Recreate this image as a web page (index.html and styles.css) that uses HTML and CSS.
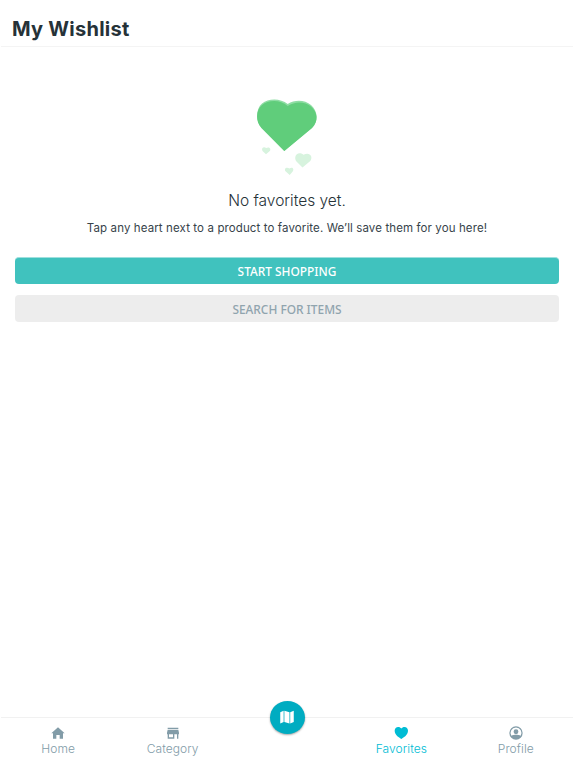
FILE: index.html
```html
<!DOCTYPE html>
<html lang="en">
<head>
    <meta charset="UTF-8">
    <title>My Wishlist</title>
    <meta content="width=device-width, initial-scale=1" name="viewport" />
    <link rel="stylesheet" href="styles.css">
</head>
<body>
    <div class="screen">
        <header class="header">
            <h1>My Wishlist</h1>
        </header>
        <main class="wishlist">
            <svg class="hearts" width="64" height="80" viewBox="255 97 64 80">
                <path class="heart-edge" d="M284.300 151 L261.500 128 C255.500 121.500 255.600 109 262 103.500 C268.500 98 280.500 98 287.700 104 C295 99.300 305 99.800 311 105 C318 111 318.500 121.500 312 128 Z" />
                <path class="heart-big" d="M284.300 151 L261.500 128 C255.500 121.500 255.600 110.500 262 105 C268.500 99.500 280.500 99.500 287.700 106 C295 101 305 101.300 311 106.500 C318 112.500 318.500 121.500 312 128 Z" />
                <path class="heart-small" d="M266 154.300 L262.500 151 C261 148.300 263.500 146.300 266.200 148 C269 146.300 271.500 148.500 269.800 151 Z" />
                <path class="heart-small" d="M302.500 167.500 L296 161 C293.500 156.500 297.500 150.500 303.500 154.800 C309.500 151.500 313.500 156.500 310.300 161 Z" />
                <path class="heart-small" d="M289.700 175 L285.500 171.300 C283.800 168.500 286.500 166.500 289.500 168.500 C292.300 166.500 294.500 168.800 292.700 171.500 Z" />
            </svg>
            <h2>No favorites yet.</h2>
            <p class="hint">Tap any heart next to a product to favorite. We’ll save them for you here!</p>
            <div class="actions">
                <button class="btn btn-primary"><span>START SHOPPING</span></button>
                <button class="btn btn-muted"><span>SEARCH FOR ITEMS</span></button>
            </div>
        </main>
        <nav class="tabs">
            <a class="tab home">
                <svg width="16" height="16" viewBox="0 0 24 24"><path d="M9.500 20.500v-5.500h5v5.500h5V12.500h2.500L12 3.500 2 12.500h2.500v8z" /></svg>
                <span>Home</span>
            </a>
            <a class="tab category">
                <svg width="16" height="16" viewBox="0 0 24 24"><path d="M4 4h16v2H4zM21 14v-2.500L20 7H4l-1 4.500V14h1v6.500h10V14h4v6.500h2V14zm-9 4.500H6V14h6z" /></svg>
                <span>Category</span>
            </a>
            <div class="tab">
                <a class="map-btn">
                    <svg width="18" height="18" viewBox="0 0 24 24"><path d="M3 5.500 7.500 3.500V18.500L3 20.500zM8.500 3.500l6.800 2V20.500l-6.800-2zM16.300 5.500 21 3.500V18.500l-4.700 2z" /></svg>
                </a>
            </div>
            <a class="tab favorites active">
                <svg width="16" height="16" viewBox="0 0 24 24"><path d="M12.500 21C10 19.600 2.500 15.500 2.500 8.800 2.500 5.300 4.800 3 7.800 3 9.800 3 11.500 3.900 12.500 5.300 13.500 3.900 15.200 3 17.200 3 20.200 3 22.500 5.300 22.500 8.800c0 6.700-7.500 10.800-10 12.200z" /></svg>
                <span>Favorites</span>
            </a>
            <a class="tab profile">
                <svg width="16" height="16" viewBox="0 0 24 24"><path fill-rule="evenodd" d="M12 2a10 10 0 1 0 0 20 10 10 0 0 0 0-20zm0 1.800a8.200 8.200 0 0 1 7 12.400C17.500 15.200 14 14.800 12 14.800s-5.500.4-7 1.400A8.200 8.200 0 0 1 12 3.800zm0 2.700a3.600 3.600 0 1 0 0 7.200 3.600 3.600 0 0 0 0-7.200z" /></svg>
                <span>Profile</span>
            </a>
        </nav>
    </div>
</body>
</html>
```
FILE: styles.css
```css
* {
    box-sizing: border-box;
}
body {
    margin: 0;
    background: #fff;
    color: #263238;
    font-family: Inter, sans-serif;
}
.screen {
    display: flex;
    flex-direction: column;
    width: 572px;
    height: 768px;
    margin-left: 1px;
}
.header {
    height: 47px;
    padding: 16px 0 0 11px;
    border-bottom: 1px solid #f4f4f4;
}
h1 {
    margin: 0;
    font-size: 20px;
    line-height: 26px;
    font-weight: 700;
    letter-spacing: 0.25px;
    white-space: nowrap;
}
.wishlist {
    flex: 1;
    display: flex;
    flex-direction: column;
    align-items: center;
    padding: 50px 14px 0;
}
.hearts {
    display: block;
}
.heart-edge {
    fill: #8fdda4;
}
.heart-big {
    fill: #60cd7b;
}
.heart-small {
    fill: #d7f3de;
}
h2 {
    margin: 14px 0 0;
    font-size: 15.5px;
    line-height: 20px;
    font-weight: 350;
}
.hint {
    margin: 9px 0 0;
    color: #37434a;
    font-size: 11.5px;
    line-height: 16px;
    letter-spacing: 0.11px;
    white-space: nowrap;
}
.actions {
    display: flex;
    flex-direction: column;
    gap: 11px;
    width: 100%;
    margin-top: 21px;
}
.btn {
    width: 100%;
    height: 27px;
    padding: 0;
    border: 0;
    border-radius: 4px;
    font-family: "Noto Sans", sans-serif;
    font-size: 11.9px;
    font-weight: 550;
}
.btn-primary {
    background: #40c2be;
    border-top: 1px solid #9fe0de;
    color: #fff;
}
.btn-muted {
    padding-top: 1px;
    background: #ededed;
    color: #90a4ae;
}
.tabs {
    display: flex;
    height: 51px;
    border-top: 1px solid #f1f1f1;
}
.tab {
    position: relative;
    flex: 1;
    display: flex;
    flex-direction: column;
    align-items: center;
    padding-top: 7px;
    color: #829ca8;
    font-size: 12px;
    line-height: 16px;
    font-weight: 300;
    letter-spacing: 0.08px;
}
.tab svg {
    fill: currentColor;
}
.tab.active {
    color: #00bcd4;
}
.map-btn {
    position: absolute;
    top: -17px;
    left: 50%;
    display: flex;
    align-items: center;
    justify-content: center;
    width: 35px;
    height: 33px;
    margin-left: -17.5px;
    padding-bottom: 1px;
    border-radius: 50%;
    background: #00acc1;
    box-shadow: 0 1px 2px rgba(0, 0, 0, 0.35);
    color: #fff;
}
```
